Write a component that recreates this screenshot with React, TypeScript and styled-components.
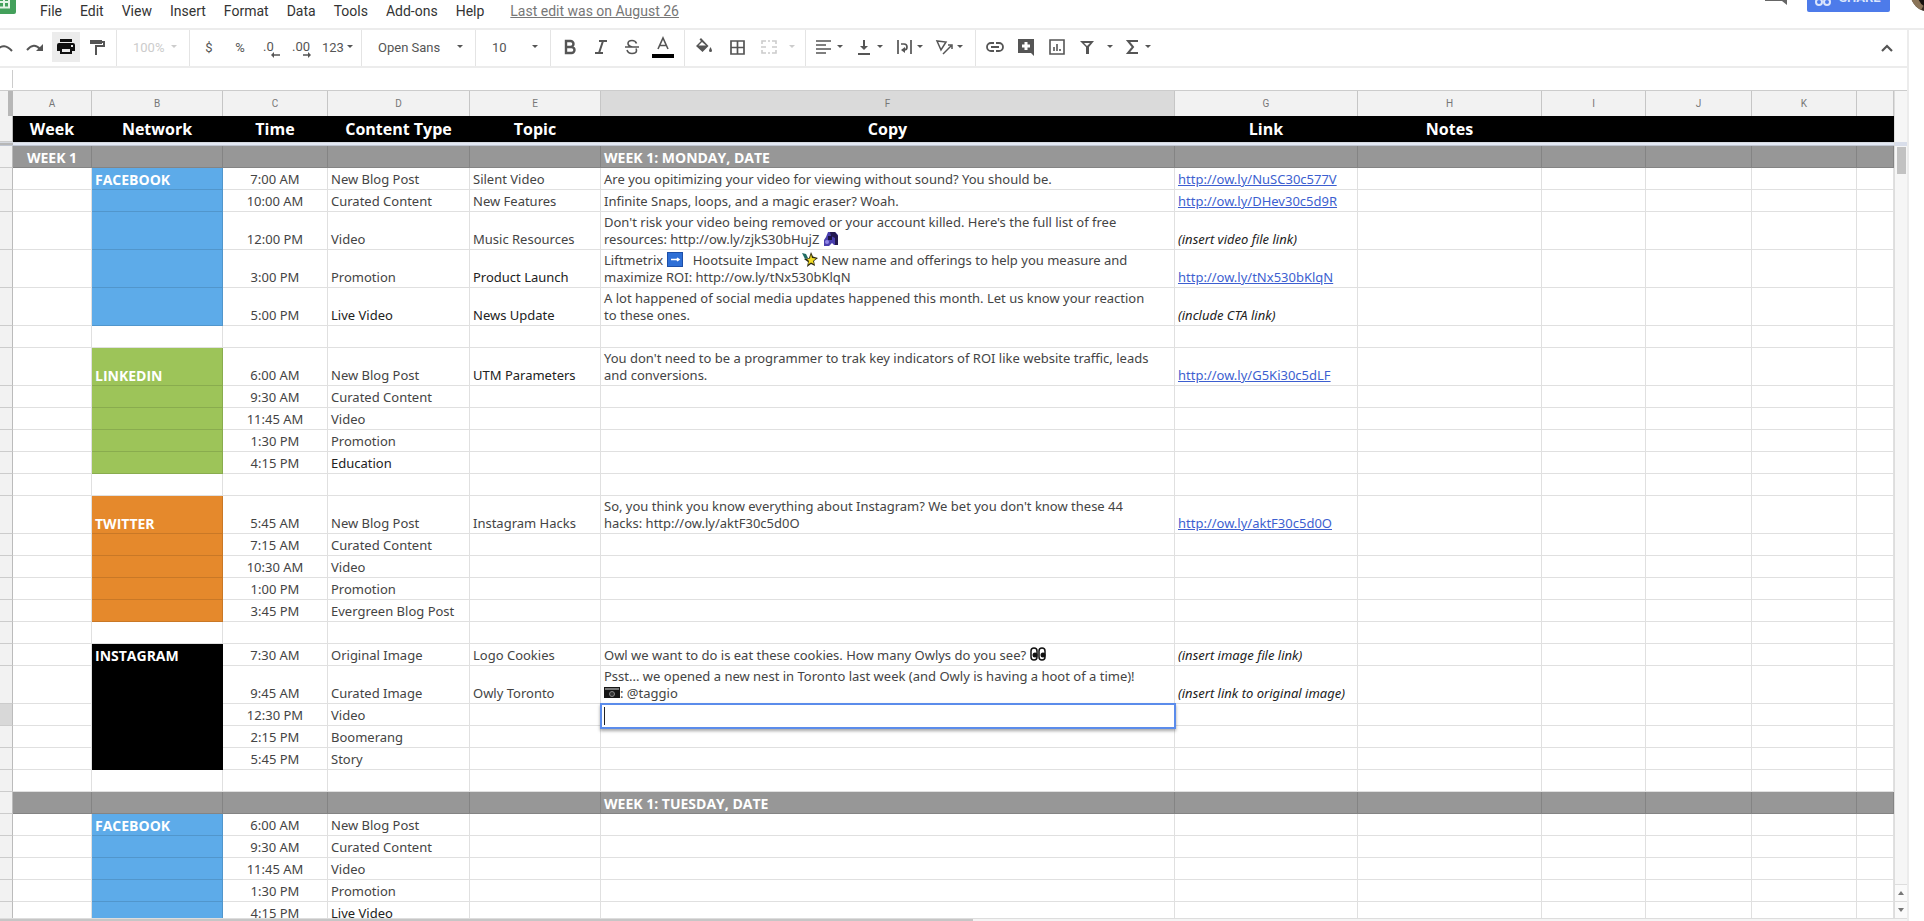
import React from "react";
import styled, { createGlobalStyle, css } from "styled-components";

const GlobalStyle = createGlobalStyle`
  *, *::before, *::after { box-sizing: border-box; }
  body { margin: 0; background: #fff; font-family: "Open Sans", sans-serif; color: #444; }
  button, input, select { font: inherit; color: inherit; }
`;

const uiFont = `Roboto, "Liberation Sans", Arial, sans-serif`;

const Page = styled.div`
  display: flex;
  flex-direction: column;
  height: 100vh;
  overflow: hidden;
`;

/* ---------- top bar ---------- */

const TopBar = styled.header`
  display: flex;
  flex: none;
  align-items: flex-end;
  height: 30px;
  overflow: hidden;
  border-bottom: 2px solid #ececec;
  font-family: ${uiFont};
`;

const Logo = styled.svg`
  flex: none;
  width: 16px;
  height: 28px;
  padding-bottom: 14px;
  overflow: visible;
`;

const MenuBar = styled.nav`
  display: flex;
  flex: 1;
  align-items: center;
  margin-left: 16px;
  padding-bottom: 5px;
`;

const MenuButton = styled.button`
  margin-right: 2px;
  padding: 0 8px;
  border: 0;
  background: none;
  color: #333;
  font-size: 14px;
  line-height: 24px;
`;

const LastEdit = styled.a`
  margin-left: 16px;
  color: #777;
  font-size: 14px;
  line-height: 24px;
`;

const CommentButton = styled.button`
  width: 24px;
  height: 24px;
  margin: 0 19px 23px 0;
  padding: 0;
  border: 0;
  background: none;
`;

const ShareButton = styled.button`
  display: flex;
  align-items: center;
  gap: 8px;
  height: 30px;
  width: 83px;
  margin: 0 20px 16px 0;
  padding: 0 8px;
  border: 0;
  border-radius: 2px;
  background: #4d7bea;
  color: #dbe5fc;
  font-size: 13px;
  font-weight: 700;
`;

const Avatar = styled.svg`
  flex: none;
  width: 14px;
  height: 28px;
`;

/* ---------- toolbar ---------- */

const Body = styled.div`
  display: flex;
  flex: 1;
  min-height: 0;
`;

const Main = styled.main`
  display: flex;
  flex: 1;
  flex-direction: column;
  min-width: 0;
`;

const SidePanel = styled.aside`
  flex: none;
  width: 17px;
  border-left: 2px solid #ececec;
`;

const Toolbar = styled.div`
  display: flex;
  flex: none;
  align-items: stretch;
  height: 38px;
  overflow: hidden;
  border-bottom: 2px solid #ececec;
  font-family: ${uiFont};
`;

const Group = styled.div<{ $width: number; $gap?: number; $last?: boolean; $cut?: boolean }>`
  display: flex;
  flex: none;
  align-items: center;
  gap: ${(p) => p.$gap ?? 3}px;
  width: ${(p) => p.$width}px;
  padding: 0 0 2px 5px;
  border-right: ${(p) => (p.$last ? "0" : "1px solid #e4e4e4")};
  ${(p) => p.$cut && css`margin-left: -15px;`}
`;

const ToolButton = styled.button<{ $active?: boolean; $menu?: boolean; $wide?: boolean; $off?: boolean }>`
  display: flex;
  flex: none;
  align-items: center;
  justify-content: ${(p) => (p.$menu ? "flex-start" : "center")};
  gap: ${(p) => (p.$wide ? 9 : 2)}px;
  width: ${(p) => (p.$wide ? 42 : p.$menu ? 37 : 28)}px;
  height: 30px;
  padding: 0 3px;
  border: 0;
  background: ${(p) => (p.$active ? "#ececec" : "none")};
  color: ${(p) => (p.$off ? "#ccc" : p.$active ? "#111" : "#555")};
  font-size: 13px;
`;

const Icon = styled.svg`
  flex: none;
  display: block;
  width: 20px;
  height: 20px;
  fill: none;
  stroke: currentColor;
  stroke-width: 2;
`;

const CaretIcon = styled.svg`
  flex: none;
  width: 8px;
  height: 4px;
  fill: currentColor;
`;

const Picker = styled.label<{ $off?: boolean }>`
  display: flex;
  flex: 1;
  align-items: center;
  padding: 0 11px;
  color: ${(p) => (p.$off ? "#ccc" : "#555")};
  font-size: 13px;
`;

const PickerSelect = styled.select`
  flex: 1;
  min-width: 0;
  padding: 0;
  border: 0;
  outline: 0;
  appearance: none;
  background: none;
  opacity: 1;
`;

const Spacer = styled.div`
  flex: 1;
`;

const CollapseButton = styled(ToolButton)`
  align-self: center;
  margin-right: 6px;
`;

const FormulaBar = styled.label`
  display: flex;
  flex: none;
  height: 23px;
  padding: 2px 0 2px 12px;
  border-bottom: 1px solid #ccc;
`;

const FormulaInput = styled.input`
  flex: 1;
  padding: 0 8px;
  border: 0;
  border-left: 1px solid #ccc;
  outline: 0;
  background: none;
  font-size: 14px;
`;

/* ---------- sheet ---------- */

const SheetArea = styled.div`
  display: flex;
  flex: 1;
  min-height: 0;
`;

const GridViewport = styled.div`
  flex: 1;
  min-width: 0;
  overflow: hidden;
`;

const Grid = styled.table`
  width: 100%;
  border-collapse: separate;
  border-spacing: 0;
  table-layout: fixed;
  font-family: "Noto Sans", "Open Sans", sans-serif;
  font-size: 13px;
  line-height: 17px;
`;

const Letter = styled.th<{ $selected?: boolean; $corner?: boolean }>`
  height: 25px;
  padding: 0;
  border-right: ${(p) => (p.$corner ? "5px solid #b7b7b7" : "1px solid #c6c6c6")};
  background: ${(p) => (p.$selected ? "#dadada" : "#f2f2f2")};
  color: #777;
  font: 10px/24px Roboto, sans-serif;
`;

const HeadCell = styled.th`
  height: 26px;
  padding: 0;
  border-right: 1px solid #000;
  background: #000;
  color: #fff;
  font-family: "Open Sans", sans-serif;
  font-size: 16px;
  font-weight: 700;
  line-height: 24px;
`;

const FreezeCell = styled.td<{ $corner?: boolean }>`
  height: 4px;
  padding: 0;
  border-top: 1px solid #d5d9e0;
  border-bottom: 1px solid #c0c6d2;
  background: ${(p) => (p.$corner ? "#b7b7b7" : "#e4e9f4")};
`;

const RowHead = styled.th<{ $selected?: boolean }>`
  padding: 0;
  border-right: 1px solid #bbb;
  border-bottom: 1px solid #ccc;
  background: ${(p) => (p.$selected ? "#d8d8d8" : "#f2f2f2")};
`;

const Row = styled.tr<{ $tall?: boolean }>`
  height: ${(p) => (p.$tall ? 38 : 22)}px;
`;

const Cell = styled.td<{ $bg?: string; $center?: boolean; $strong?: boolean; $note?: boolean; $dark?: boolean }>`
  position: relative;
  padding: 0 0 1px 3px;
  border-right: 1px solid rgba(0, 0, 0, 0.12);
  border-bottom: 1px solid rgba(0, 0, 0, 0.12);
  background: ${(p) => p.$bg ?? "#fff"};
  color: ${(p) => (p.$bg ? "#fff" : p.$dark || p.$note ? "#222" : "#444")};
  font-style: ${(p) => (p.$note ? "italic" : "normal")};
  text-align: ${(p) => (p.$center ? "center" : "left")};
  vertical-align: bottom;
  white-space: nowrap;
  ${(p) => p.$center && css`padding-left: 0;`}
  ${(p) => p.$strong && css`
    font-family: "Open Sans", sans-serif;
    font-size: 14px;
    font-weight: 700;
  `}
`;

const CellLink = styled.a`
  color: #3d5fd0;
  text-decoration: underline;
`;

const CellEditor = styled.input`
  position: absolute;
  inset: -1px -2px -4px -1px;
  width: calc(100% + 3px);
  height: calc(100% + 5px);
  padding: 0 3px;
  border: 2px solid #5b8ceb;
  outline: 0;
  background: #fff;
  box-shadow: 0 2px 3px rgba(0, 0, 0, 0.35);
  z-index: 1;
`;

const TextCursor = styled.span`
  position: absolute;
  top: 3px;
  left: 3px;
  width: 1px;
  height: 18px;
  background: #222;
  z-index: 2;
`;

const Emoji = styled.svg`
  display: inline-block;
  width: 16px;
  height: 15px;
  vertical-align: -2px;
`;

const ScrollColumn = styled.div`
  display: flex;
  flex: none;
  flex-direction: column;
  width: 13px;
  border-left: 1px solid #ddd;
  background: #f6f6f6;
`;

const ScrollTop = styled.div`
  height: 55px;
  border-bottom: 4px solid #d9deea;
`;

const ScrollThumb = styled.div`
  height: 27px;
  margin: 1px 1px 0 2px;
  background: #c2c2c2;
`;

const ScrollArrow = styled.button`
  display: flex;
  align-items: center;
  justify-content: center;
  height: 17px;
  padding: 0;
  border: 0;
  border-top: 1px solid #ddd;
  background: #fafafa;
  color: #777;
`;

const HorizontalScroll = styled.div`
  flex: none;
  height: 3px;
  padding-right: 49%;
  border-top: 1px solid #ddd;
  background: #f4f4f4;
`;

const HorizontalThumb = styled.div`
  height: 2px;
  background: #c6c6c6;
`;

/* ---------- small drawings ---------- */

const Caret = () => (
  <CaretIcon viewBox="0 0 8 4" aria-hidden="true">
    <path d="M1 0h6L4 3z" />
  </CaretIcon>
);

const Arrow = ({ up }: { up?: boolean }) => (
  <CaretIcon viewBox="0 0 8 4" aria-hidden="true">
    <path d={up ? "M1 4h6L4 0z" : "M1 0h6L4 4z"} />
  </CaretIcon>
);

const icons: Record<string, React.ReactNode> = {
  undo: <path d="M3 14v-5M3 13q7-8 15 1" />,
  redo: <><path d="M2 13q7-8 13-1" /><path d="M18 7v7h-7z" fill="currentColor" stroke="none" /></>,
  print: (
    <g fill="currentColor" stroke="none">
      <path d="M4 2h12v3H4z" />
      <path fillRule="evenodd" d="M3 6h14a2 2 0 0 1 2 2v6h-3v3H4v-3H1V8a2 2 0 0 1 2-2zm3 6v3h8v-3zm9-4v2h2V8z" />
    </g>
  ),
  paint: <><path d="M3 3h12v4H3z" fill="currentColor" stroke="none" /><path d="M14 5h3v4H9v9" /></>,
  bold: <path d="M6 4h4.500a3 3 0 0 1 0 6H6zM6 10h5.500a3 3 0 0 1 0 6H6z" strokeWidth="2.400" />,
  italic: <path d="M8 4h8M4 16h8M12 4L8 16" />,
  strike: <path d="M14.500 6.500Q13.500 3.500 10 3.500q-4 0-4 3 0 2.500 4.500 3.500M5 13q1 3.500 5 3.500 4.500 0 4.500-3 0-1-.5-2M3 10h14" strokeWidth="1.600" />,
  fill: (
    <g fill="currentColor" stroke="none">
      <path fillRule="evenodd" d="M7 1l7.500 8L8.500 15 2 9l5-5-1.500-1.600zM8 5L4.500 8.500h7.500z" />
      <path d="M16.500 10q3 5 0 5t0-5" />
    </g>
  ),
  borders: <path d="M4 4h13v13H4zM10.500 4v13M4 10.500h13" strokeWidth="1.700" />,
  merge: <path d="M7 4H3v3M13 4h4v3M7 16H3v-3M13 16h4v-3M2 10h5M13 10h5M9 4h2M9 16h2" strokeWidth="1.600" />,
  align: <path d="M2 4h15M2 8h10M2 12h15M2 16h10" strokeWidth="1.700" />,
  valign: <><path d="M10 3v7M4 17h12" /><path d="M6 9h8l-4 4z" fill="currentColor" stroke="none" /></>,
  wrap: <><path d="M4 3v14M17 3v14M7 7h3q3 0 3 3t-3 3" strokeWidth="1.700" /><path d="M11 10v6l-4-3z" fill="currentColor" stroke="none" /></>,
  rotate: <path d="M3 4l4 9 5-8zM9 17l8-8M14 8h4v4" strokeWidth="1.500" />,
  link: <path d="M9 6H6a4 4 0 0 0 0 8h3M11 6h3a4 4 0 0 1 0 8h-3M6 10h8" strokeWidth="1.800" />,
  comment: <><path d="M2 2h16v17l-3-3H2z" fill="currentColor" stroke="none" /><path d="M10 5v8M6 9h8" stroke="#fff" strokeWidth="3" /></>,
  chart: <path d="M3 3h14v14H3zM7 14v-4M10 14V7M13 14v-2" strokeWidth="1.600" />,
  filter: <path fillRule="evenodd" d="M3 4h14l-5 6v7H9v-7zM7 6l3 3 3-3z" fill="currentColor" stroke="none" />,
  sigma: <path d="M16 4H6l5 6-5 6h10" />,
  up: <path d="M5 13l5-5 5 5" strokeWidth="2.200" />,
};

const Glyph = ({ name }: { name: string }) => (
  <Icon viewBox="0 0 20 20" aria-hidden="true">{icons[name]}</Icon>
);

const TextColor = () => (
  <Icon viewBox="0 0 20 20" aria-hidden="true" overflow="visible">
    <path d="M5 12L10 1l5 11M7 8.500h6" strokeWidth="1.600" />
    <path d="M-1 19h22" stroke="#000" strokeWidth="4" />
  </Icon>
);

const DecimalIcon = ({ digits, right }: { digits: string; right?: boolean }) => (
  <Icon viewBox="0 0 20 20" aria-hidden="true" overflow="visible">
    <text x={right ? 0 : 2} y="14" fill="currentColor" stroke="none" fontSize="13">{digits}</text>
    <path d={right ? "M11 18h6" : "M13 18h6"} strokeWidth="1.500" />
    <path d={right ? "M16 15l3 3-3 3z" : "M13 15l-3 3 3 3z"} fill="currentColor" stroke="none" />
  </Icon>
);

const Disc = () => (
  <Emoji viewBox="0 0 16 15" role="img" aria-label="music">
    <path d="M5 1h7l3 3v10h-4l-2-2-3 3H1V9l2-3z" fill="#4a3fae" />
    <path d="M7 1h5l3 4v9h-3V7L8 5z" fill="#23194f" />
    <path d="M5 5h4v4H5z" fill="#1c1440" />
    <circle cx="4" cy="11" r="2" fill="#8f86e6" />
  </Emoji>
);
const ArrowBox = () => (
  <Emoji viewBox="0 0 16 15" role="img" aria-label="right arrow">
    <path d="M0 0h16v15H0z" fill="#1d4fa8" />
    <path d="M1 1h14v13H1z" fill="#2e6fd6" />
    <path d="M4 7.500h7M10 6l2 1.500L10 9" stroke="#fff" strokeWidth="1.500" fill="none" />
  </Emoji>
);
const Sparkle = () => (
  <Emoji viewBox="0 0 16 15" role="img" aria-label="sparkles">
    <path d="M9 0l2 4.500 5 1.500-4 3 1 5-4-2-4 3 1-5-4-3 5-1z" fill="#2c2a12" />
    <path d="M9 2l1 4 4 .5-3 2.500 1 3-3-1.500-3 2 1-3.500-2-2 3-.5z" fill="#f2dc27" />
    <path d="M0 1l4 1 2 4-3 1z" fill="#1f6b62" />
  </Emoji>
);
const Eyes = () => (
  <Emoji viewBox="0 0 16 15" role="img" aria-label="eyes">
    <rect x="1" y="1" width="6" height="12" rx="3" fill="#fff" stroke="#111" strokeWidth="1.500" />
    <rect x="9" y="1" width="6" height="12" rx="3" fill="#fff" stroke="#111" strokeWidth="1.500" />
    <circle cx="5" cy="8" r="2.500" fill="#111" />
    <circle cx="13" cy="8" r="2.500" fill="#111" />
  </Emoji>
);
const Camera = () => (
  <Emoji viewBox="0 0 16 15" role="img" aria-label="camera">
    <path d="M0 2h16v11H0z" fill="#161616" />
    <path d="M1 3h14v2H1z" fill="#777" />
    <circle cx="8" cy="9" r="2.500" fill="#333" stroke="#888" />
  </Emoji>
);

/* ---------- data ---------- */

const BLUE = "#5dabe9";
const GREEN = "#9dc459";
const ORANGE = "#e5892c";
const BLACK = "#000";
const GREY = "#979797";

type RowData = {
  divider?: string;
  week?: string;
  color?: string;
  network?: string;
  time?: string;
  type?: string;
  topic?: string;
  darkType?: boolean;
  darkTopic?: boolean;
  copy?: React.ReactNode;
  link?: string;
  note?: string;
  tall?: boolean;
  editing?: boolean;
};

const rows: RowData[] = [
  { divider: "WEEK 1: MONDAY, DATE", week: "WEEK 1" },
  { color: BLUE, network: "FACEBOOK", time: "7:00 AM", type: "New Blog Post", topic: "Silent Video", copy: "Are you opitimizing your video for viewing without sound? You should be.", link: "http://ow.ly/NuSC30c577V" },
  { color: BLUE, time: "10:00 AM", type: "Curated Content", topic: "New Features", copy: "Infinite Snaps, loops, and a magic eraser? Woah.", link: "http://ow.ly/DHev30c5d9R" },
  { color: BLUE, time: "12:00 PM", type: "Video", topic: "Music Resources", tall: true, note: "(insert video file link)",
    copy: <>Don't risk your video being removed or your account killed. Here's the full list of free<br />resources: http://ow.ly/zjkS30bHujZ <Disc /></> },
  { color: BLUE, time: "3:00 PM", type: "Promotion", topic: "Product Launch", darkTopic: true, tall: true, link: "http://ow.ly/tNx530bKlqN",
    copy: <>Liftmetrix <ArrowBox /> &nbsp; Hootsuite Impact <Sparkle /> New name and offerings to help you measure and<br />maximize ROI: http://ow.ly/tNx530bKlqN</> },
  { color: BLUE, time: "5:00 PM", type: "Live Video", darkType: true, topic: "News Update", darkTopic: true, tall: true, note: "(include CTA link)",
    copy: <>A lot happened of social media updates happened this month. Let us know your reaction<br />to these ones.</> },
  {},
  { color: GREEN, network: "LINKEDIN", time: "6:00 AM", type: "New Blog Post", topic: "UTM Parameters", darkTopic: true, tall: true, link: "http://ow.ly/G5Ki30c5dLF",
    copy: <>You don't need to be a programmer to trak key indicators of ROI like website traffic, leads<br />and conversions.</> },
  { color: GREEN, time: "9:30 AM", type: "Curated Content" },
  { color: GREEN, time: "11:45 AM", type: "Video" },
  { color: GREEN, time: "1:30 PM", type: "Promotion" },
  { color: GREEN, time: "4:15 PM", type: "Education", darkType: true },
  {},
  { color: ORANGE, network: "TWITTER", time: "5:45 AM", type: "New Blog Post", topic: "Instagram Hacks", tall: true, link: "http://ow.ly/aktF30c5d0O",
    copy: <>So, you think you know everything about Instagram? We bet you don't know these 44<br />hacks: http://ow.ly/aktF30c5d0O</> },
  { color: ORANGE, time: "7:15 AM", type: "Curated Content" },
  { color: ORANGE, time: "10:30 AM", type: "Video" },
  { color: ORANGE, time: "1:00 PM", type: "Promotion" },
  { color: ORANGE, time: "3:45 PM", type: "Evergreen Blog Post" },
  {},
  { color: BLACK, network: "INSTAGRAM", time: "7:30 AM", type: "Original Image", topic: "Logo Cookies", note: "(insert image file link)",
    copy: <>Owl we want to do is eat these cookies. How many Owlys do you see? <Eyes /></> },
  { color: BLACK, time: "9:45 AM", type: "Curated Image", topic: "Owly Toronto", tall: true, note: "(insert link to original image)",
    copy: <>Psst... we opened a new nest in Toronto last week (and Owly is having a hoot of a time)!<br /><Camera />: @taggio</> },
  { color: BLACK, time: "12:30 PM", type: "Video", editing: true },
  { color: BLACK, time: "2:15 PM", type: "Boomerang" },
  { color: BLACK, time: "5:45 PM", type: "Story" },
  {},
  { divider: "WEEK 1: TUESDAY, DATE" },
  { color: BLUE, network: "FACEBOOK", time: "6:00 AM", type: "New Blog Post" },
  { color: BLUE, time: "9:30 AM", type: "Curated Content" },
  { color: BLUE, time: "11:45 AM", type: "Video" },
  { color: BLUE, time: "1:30 PM", type: "Promotion" },
  { color: BLUE, time: "4:15 PM", type: "Live Video", darkType: true },
];

const columnWidths = [13, 79, 131, 105, 142, 131, 574, 183, 184, 104, 106, 105];
const letters = ["A", "B", "C", "D", "E", "F", "G", "H", "I", "J", "K", ""];
const headings = ["Week", "Network", "Time", "Content Type", "Topic", "Copy", "Link", "Notes", "", "", "", ""];
const menus = ["File", "Edit", "View", "Insert", "Format", "Data", "Tools", "Add-ons", "Help"];
const emptyTail = ["H", "I", "J", "K", "L"];

const SheetRow = ({ row }: { row: RowData }) => {
  const bg = row.divider ? GREY : undefined;
  return (
    <Row $tall={row.tall}>
      <RowHead scope="row" $selected={row.editing} />
      <Cell $bg={bg} $center $strong>{row.week}</Cell>
      <Cell $bg={bg ?? row.color} $strong>{row.network}</Cell>
      <Cell $bg={bg} $center>{row.time}</Cell>
      <Cell $bg={bg} $dark={row.darkType}>{row.type}</Cell>
      <Cell $bg={bg} $dark={row.darkTopic}>{row.topic}</Cell>
      <Cell $bg={bg} $strong={!!row.divider}>
        {row.divider ?? row.copy}
        {row.editing && (
          <>
            <CellEditor aria-label="Cell F contents" defaultValue="" />
            <TextCursor />
          </>
        )}
      </Cell>
      <Cell $bg={bg} $note={!!row.note}>
        {row.link ? <CellLink href={row.link}>{row.link}</CellLink> : row.note}
      </Cell>
      {emptyTail.map((c) => <Cell key={c} $bg={bg} />)}
    </Row>
  );
};

export default function App() {
  return (
    <Page>
      <GlobalStyle />
      <TopBar>
        <Logo viewBox="0 0 16 14" aria-hidden="true">
          <path d="M0-14h16v26a2 2 0 0 1-2 2H0z" fill="#43a05b" />
          <path d="M0-3h9V7.500H0M0 2h9M4-3V7" fill="none" stroke="#e3f3e6" strokeWidth="2" />
        </Logo>
        <MenuBar>
          {menus.map((m) => <MenuButton key={m}>{m}</MenuButton>)}
          <LastEdit href="#history">Last edit was on August 26</LastEdit>
        </MenuBar>
        <CommentButton aria-label="Comments">
          <svg width="24" height="24" viewBox="0 0 24 24" aria-hidden="true">
            <path d="M1 1h22v23l-5-4H1z" fill="#666" />
          </svg>
        </CommentButton>
        <ShareButton>
          <svg width="16" height="18" viewBox="0 0 16 18" fill="none" stroke="#dbe5fc" strokeWidth="2" aria-hidden="true">
            <circle cx="4" cy="14" r="3" />
            <circle cx="12" cy="14" r="3" />
          </svg>
          SHARE
        </ShareButton>
        <Avatar viewBox="0 0 14 28" aria-hidden="true">
          <circle cx="20" cy="-8" r="20" fill="#3a2f26" />
          <path d="M1-2q3 9 10 12l3-5-8-8z" fill="#8a7458" />
          <path d="M8-2h6v8q-4-2-6-8z" fill="#15110e" />
        </Avatar>
      </TopBar>

      <Body>
        <Main>
          <Toolbar role="toolbar" aria-label="Formatting">
            <Group $width={132} $cut>
              <ToolButton aria-label="Undo"><Glyph name="undo" /></ToolButton>
              <ToolButton aria-label="Redo"><Glyph name="redo" /></ToolButton>
              <ToolButton aria-label="Print" $active><Glyph name="print" /></ToolButton>
              <ToolButton aria-label="Paint format"><Glyph name="paint" /></ToolButton>
            </Group>
            <Group $width={73}>
              <Picker $off>
                <PickerSelect aria-label="Zoom"><option>100%</option></PickerSelect>
                <Caret />
              </Picker>
            </Group>
            <Group $width={172}>
              <ToolButton>$</ToolButton>
              <ToolButton>%</ToolButton>
              <ToolButton aria-label="Decrease decimal places"><DecimalIcon digits=".0" /></ToolButton>
              <ToolButton aria-label="Increase decimal places"><DecimalIcon digits=".00" right /></ToolButton>
              <ToolButton $menu>123<Caret /></ToolButton>
            </Group>
            <Group $width={114}>
              <Picker>
                <PickerSelect aria-label="Font"><option>Open Sans</option></PickerSelect>
                <Caret />
              </Picker>
            </Group>
            <Group $width={75}>
              <Picker>
                <PickerSelect aria-label="Font size"><option>10</option></PickerSelect>
                <Caret />
              </Picker>
            </Group>
            <Group $width={134}>
              <ToolButton aria-label="Bold"><Glyph name="bold" /></ToolButton>
              <ToolButton aria-label="Italic"><Glyph name="italic" /></ToolButton>
              <ToolButton aria-label="Strikethrough"><Glyph name="strike" /></ToolButton>
              <ToolButton aria-label="Text color"><TextColor /></ToolButton>
            </Group>
            <Group $width={121} $gap={5}>
              <ToolButton aria-label="Fill color"><Glyph name="fill" /></ToolButton>
              <ToolButton aria-label="Borders"><Glyph name="borders" /></ToolButton>
              <ToolButton aria-label="Merge cells" $menu $wide $off><Glyph name="merge" /><Caret /></ToolButton>
            </Group>
            <Group $width={170}>
              <ToolButton aria-label="Horizontal align" $menu><Glyph name="align" /><Caret /></ToolButton>
              <ToolButton aria-label="Vertical align" $menu><Glyph name="valign" /><Caret /></ToolButton>
              <ToolButton aria-label="Text wrapping" $menu><Glyph name="wrap" /><Caret /></ToolButton>
              <ToolButton aria-label="Text rotation" $menu><Glyph name="rotate" /><Caret /></ToolButton>
            </Group>
            <Group $width={190} $last>
              <ToolButton aria-label="Insert link"><Glyph name="link" /></ToolButton>
              <ToolButton aria-label="Insert comment"><Glyph name="comment" /></ToolButton>
              <ToolButton aria-label="Insert chart"><Glyph name="chart" /></ToolButton>
              <ToolButton aria-label="Filter" $menu $wide><Glyph name="filter" /><Caret /></ToolButton>
              <ToolButton aria-label="Functions" $menu><Glyph name="sigma" /><Caret /></ToolButton>
            </Group>
            <Spacer />
            <CollapseButton aria-label="Hide the menus"><Glyph name="up" /></CollapseButton>
          </Toolbar>

          <FormulaBar>
            <FormulaInput aria-label="Formula" defaultValue="" />
          </FormulaBar>

          <SheetArea>
            <GridViewport>
              <Grid>
                <colgroup>
                  {columnWidths.map((w, i) => <col key={i} width={w} />)}
                  <col />
                </colgroup>
                <thead>
                  <tr>
                    <Letter $corner />
                    {letters.map((l, i) => <Letter key={i} scope="col" $selected={l === "F"}>{l}</Letter>)}
                  </tr>
                  <tr>
                    <RowHead scope="row" />
                    {headings.map((h, i) => <HeadCell key={i} scope="col">{h}</HeadCell>)}
                  </tr>
                  <tr>
                    <FreezeCell $corner />
                    <FreezeCell colSpan={12} />
                  </tr>
                </thead>
                <tbody>
                  {rows.map((r, i) => <SheetRow key={i} row={r} />)}
                </tbody>
              </Grid>
            </GridViewport>
            <ScrollColumn>
              <ScrollTop />
              <ScrollThumb />
              <Spacer />
              <ScrollArrow aria-label="Scroll up"><Arrow up /></ScrollArrow>
              <ScrollArrow aria-label="Scroll down"><Arrow /></ScrollArrow>
            </ScrollColumn>
          </SheetArea>
          <HorizontalScroll><HorizontalThumb /></HorizontalScroll>
        </Main>
        <SidePanel aria-label="Side panel" />
      </Body>
    </Page>
  );
}
